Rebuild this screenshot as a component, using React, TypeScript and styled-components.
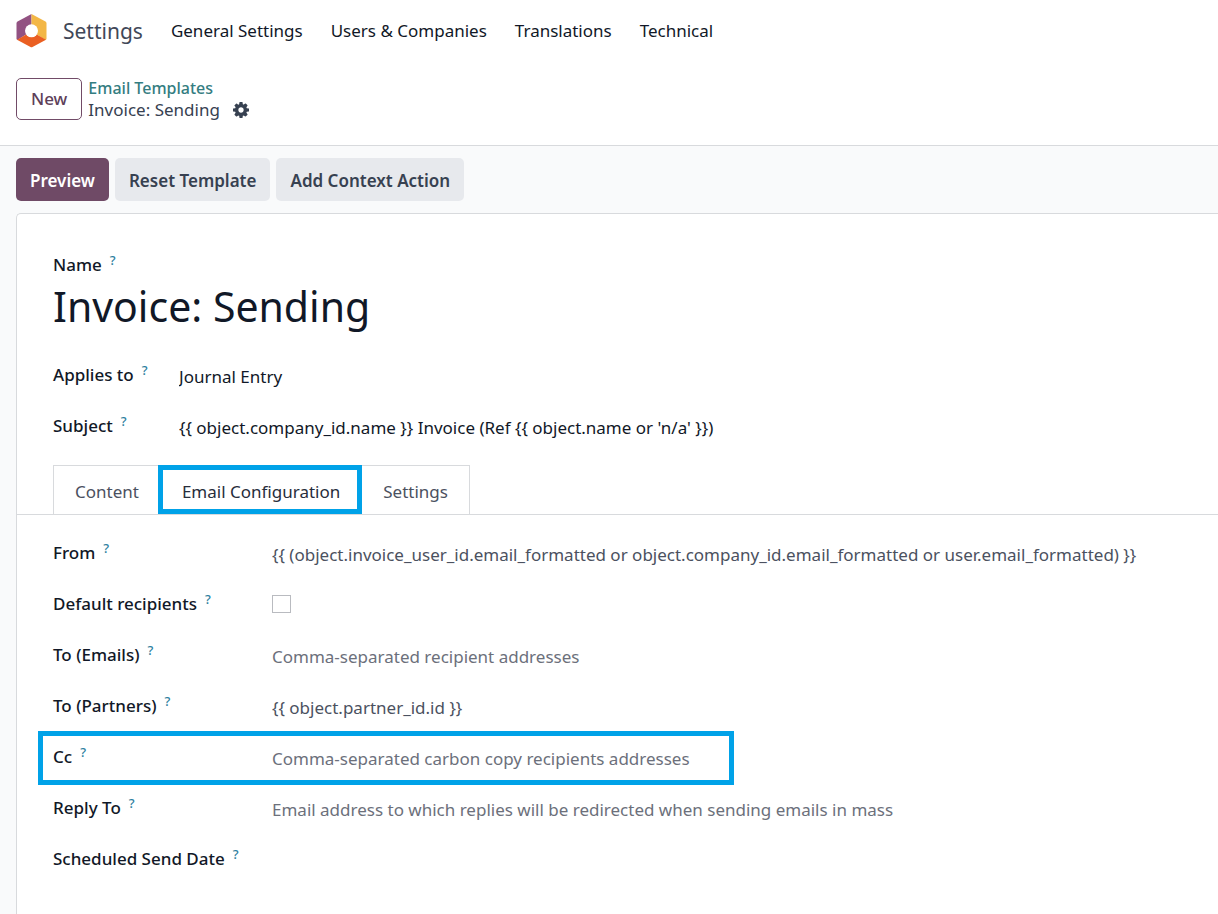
import React, { useState } from "react";
import styled, { createGlobalStyle, css } from "styled-components";

const GlobalStyle = createGlobalStyle`
  *, *::before, *::after { box-sizing: border-box; }
  body {
    margin: 0;
    background: #f9fafb;
    color: #374151;
    font-family: "Noto Sans", "Open Sans", sans-serif;
    font-size: 17px;
    line-height: 24px;
  }
  button, input { font: inherit; color: inherit; }
`;

const Page = styled.div`
  min-height: 100vh;
  display: flex;
  flex-direction: column;
`;

const Header = styled.header`
  background: #ffffff;
  border-bottom: 1px solid #d8dadd;
  padding: 0 16px 24px;
`;

const NavBar = styled.nav`
  display: flex;
  align-items: center;
  height: 62px;
  gap: 28px;
`;

const Brand = styled.a`
  display: flex;
  align-items: center;
  gap: 16px;
  color: #414858;
  font-size: 21px;
  text-decoration: none;
`;

const NavLink = styled.a`
  color: #111827;
  text-decoration: none;
  white-space: nowrap;
`;

const ControlPanel = styled.div`
  display: flex;
  align-items: center;
  gap: 6px;
  padding-top: 15px;
`;

const NewButton = styled.button`
  height: 42px;
  padding: 0 14px;
  border: 1px solid #714b67;
  border-radius: 5px;
  background: #ffffff;
  color: #5d4059;
  font-weight: 500;
`;

const Breadcrumb = styled.div`
  display: flex;
  flex-direction: column;
  line-height: 22px;
`;

const CrumbLink = styled.a`
  color: #347d81;
  font-size: 16px;
  font-weight: 500;
  text-decoration: none;
`;

const CrumbCurrent = styled.div`
  display: flex;
  align-items: center;
  gap: 13px;
`;

const IconButton = styled.button`
  display: flex;
  padding: 0;
  border: 0;
  background: none;
  color: #374151;
`;

const ActionBar = styled.div`
  display: flex;
  gap: 6px;
  padding: 12px 16px;
`;

const ActionButton = styled.button<{ $primary?: boolean }>`
  height: 43px;
  padding: 2px 14px 0;
  border: 0;
  border-radius: 5px;
  background: ${(p) => (p.$primary ? "#6f4a66" : "#e7e9ed")};
  color: ${(p) => (p.$primary ? "#ffffff" : "#374151")};
  font-weight: 600;
`;

const Sheet = styled.main`
  flex: 1;
  margin-left: 16px;
  border: 1px solid #d8dadd;
  border-width: 1px 0 0 1px;
  border-top-left-radius: 5px;
  background: #ffffff;
  padding-top: 39px;
`;

const SheetSection = styled.section`
  padding: 0 36px;
`;

const Label = styled.label`
  color: #111827;
  font-weight: 500;
  white-space: nowrap;
`;

const Help = styled.span`
  margin-left: 8px;
  color: #2f7f9f;
  font-size: 13px;
  font-weight: 500;
  line-height: 12px;
  vertical-align: 6px;
`;

const TitleInput = styled.input`
  display: block;
  width: 100%;
  height: 58px;
  margin-bottom: 14px;
  padding: 0;
  border: 0;
  outline: 0;
  background: transparent;
  color: #111827;
  font-size: 41px;
`;

const Field = styled.div<{ $labelWidth: number; $highlighted?: boolean }>`
  display: grid;
  grid-template-columns: ${(p) => p.$labelWidth}px minmax(0, 1fr);
  align-items: center;
  height: 51px;
  ${(p) =>
    p.$highlighted &&
    css`
      position: relative;
      &::after {
        content: "";
        position: absolute;
        inset: 0 auto -3px -15px;
        width: 696px;
        border: 5px solid #00a2e8;
        pointer-events: none;
      }
    `}
`;

const TextInput = styled.input<{ $strong?: boolean }>`
  width: 100%;
  height: 30px;
  padding: 3px 0 0;
  border: 0;
  outline: 0;
  background: transparent;
  color: ${(p) => (p.$strong ? "#111827" : "#4b5160")};
  &::placeholder { color: #6c707b; opacity: 1; }
`;

const CheckBox = styled.input`
  appearance: none;
  width: 19px;
  height: 18px;
  margin: 0;
  border: 1px solid #b9bbc0;
  background: #ffffff;
`;

const TabList = styled.div`
  display: flex;
  margin-top: 14px;
  padding-left: 36px;
  border-bottom: 1px solid #d8dadd;
`;

const Tab = styled.button<{ $active: boolean }>`
  height: 49px;
  padding: 4px 21px 0;
  border: 1px solid #d8dadd;
  border-width: 1px 1px 0 0;
  background: #ffffff;
  color: #4b5160;
  &:first-child { border-left-width: 1px; }
  ${(p) =>
    p.$active &&
    css`
      position: relative;
      color: #272d3b;
      &::after {
        content: "";
        position: absolute;
        inset: -1px -1px 0 -3px;
        border: 5px solid #00a2e8;
        pointer-events: none;
      }
    `}
`;

const Logo = () => (
  <svg width="31" height="34" viewBox="0 0 31 34" aria-hidden="true">
    <path d="M15.500 0 1.500 7.600Q.5 8.200.5 9.500V24.500Q.5 25.500 1.400 26L15.500 17Z" fill="#925282" />
    <path d="M15.500 0 29.500 7.600Q30.500 8.200 30.500 9.500V24.500Q30.500 25.500 29.600 26L15.500 17Z" fill="#f3b746" />
    <path d="M1 25.700 15.500 17.500 30 25.700 16.500 33Q15.500 33.600 14.500 33Z" fill="#ea5f22" />
    <circle cx="15.500" cy="16.800" r="6.500" fill="#fff" />
  </svg>
);

const Gear = () => (
  <svg width="16" height="16" viewBox="0 0 1536 1536" fill="currentColor" aria-hidden="true">
    <path d="M1024 768q0-106-75-181t-181-75-181 75-75 181 75 181 181 75 181-75 75-181zm512-109v222q0 12-8 23t-20 13l-185 28q-19 54-39 91 35 50 107 138 10 12 10 25t-9 23q-27 37-99 108t-94 71q-12 0-26-9l-138-108q-44 23-91 38-16 136-29 186-7 28-36 28H657q-14 0-24.500-8.500T621 1506l-28-184q-49-16-90-37l-141 107q-10 9-25 9-14 0-25-11-126-114-165-168-7-10-7-23 0-12 8-23 15-21 51-66.500t54-70.500q-27-50-41-99L29 913q-13-2-21-12.500T0 877V655q0-12 8-23t19-13l186-28q14-46 39-92-40-57-107-138-10-12-10-24 0-10 9-23 26-36 98.500-107.500T337 135q13 0 26 10l138 107q44-23 91-38 16-136 29-186 7-28 36-28h222q14 0 24.500 8.500T915 30l28 184q49 16 90 37l142-107q9-9 24-9 13 0 25 10 129 119 165 170 7 8 7 22 0 12-8 23-15 21-51 66.500t-54 70.500q26 50 41 98l183 28q13 2 21 12.500t8 23.500z" />
  </svg>
);

const navItems = ["General Settings", "Users & Companies", "Translations", "Technical"];
const tabs = ["Content", "Email Configuration", "Settings"];

type FieldSpec = {
  id: string;
  label: string;
  value?: string;
  placeholder?: string;
  checkbox?: boolean;
  highlighted?: boolean;
};

const summaryFields: FieldSpec[] = [
  { id: "model", label: "Applies to", value: "Journal Entry" },
  {
    id: "subject",
    label: "Subject",
    value: "{{ object.company_id.name }} Invoice (Ref {{ object.name or 'n/a' }})",
  },
];

const emailFields: FieldSpec[] = [
  {
    id: "from",
    label: "From",
    value:
      "{{ (object.invoice_user_id.email_formatted or object.company_id.email_formatted or user.email_formatted) }}",
  },
  { id: "default-recipients", label: "Default recipients", checkbox: true },
  { id: "to-emails", label: "To (Emails)", placeholder: "Comma-separated recipient addresses" },
  { id: "to-partners", label: "To (Partners)", value: "{{ object.partner_id.id }}" },
  {
    id: "cc",
    label: "Cc",
    placeholder: "Comma-separated carbon copy recipients addresses",
    highlighted: true,
  },
  {
    id: "reply-to",
    label: "Reply To",
    placeholder: "Email address to which replies will be redirected when sending emails in mass",
  },
  { id: "scheduled", label: "Scheduled Send Date" },
];

const FormField = ({ spec, labelWidth, strong }: { spec: FieldSpec; labelWidth: number; strong?: boolean }) => (
  <Field $labelWidth={labelWidth} $highlighted={spec.highlighted}>
    <Label htmlFor={spec.id}>
      {spec.label}
      <Help>?</Help>
    </Label>
    {spec.checkbox ? (
      <CheckBox id={spec.id} type="checkbox" />
    ) : (
      <TextInput
        id={spec.id}
        type="text"
        $strong={strong}
        defaultValue={spec.value}
        placeholder={spec.placeholder}
      />
    )}
  </Field>
);

const EmailPanel = styled(SheetSection)`
  padding-top: 12px;
  padding-bottom: 30px;
`;

export default function App() {
  const [active, setActive] = useState("Email Configuration");
  return (
    <Page>
      <GlobalStyle />
      <Header>
        <NavBar>
          <Brand href="#">
            <Logo />
            Settings
          </Brand>
          {navItems.map((item) => (
            <NavLink key={item} href="#">
              {item}
            </NavLink>
          ))}
        </NavBar>
        <ControlPanel>
          <NewButton type="button">New</NewButton>
          <Breadcrumb>
            <CrumbLink href="#">Email Templates</CrumbLink>
            <CrumbCurrent>
              Invoice: Sending
              <IconButton type="button" aria-label="Actions">
                <Gear />
              </IconButton>
            </CrumbCurrent>
          </Breadcrumb>
        </ControlPanel>
      </Header>
      <ActionBar>
        <ActionButton type="button" $primary>
          Preview
        </ActionButton>
        <ActionButton type="button">Reset Template</ActionButton>
        <ActionButton type="button">Add Context Action</ActionButton>
      </ActionBar>
      <Sheet>
        <SheetSection>
          <Label htmlFor="name">
            Name
            <Help>?</Help>
          </Label>
          <TitleInput id="name" type="text" defaultValue="Invoice: Sending" />
          {summaryFields.map((spec) => (
            <FormField key={spec.id} spec={spec} labelWidth={126} strong />
          ))}
        </SheetSection>
        <TabList role="tablist">
          {tabs.map((tab) => (
            <Tab
              key={tab}
              type="button"
              role="tab"
              aria-selected={tab === active}
              $active={tab === active}
              onClick={() => setActive(tab)}
            >
              {tab}
            </Tab>
          ))}
        </TabList>
        <EmailPanel>
          {emailFields.map((spec) => (
            <FormField key={spec.id} spec={spec} labelWidth={219} />
          ))}
        </EmailPanel>
      </Sheet>
    </Page>
  );
}
